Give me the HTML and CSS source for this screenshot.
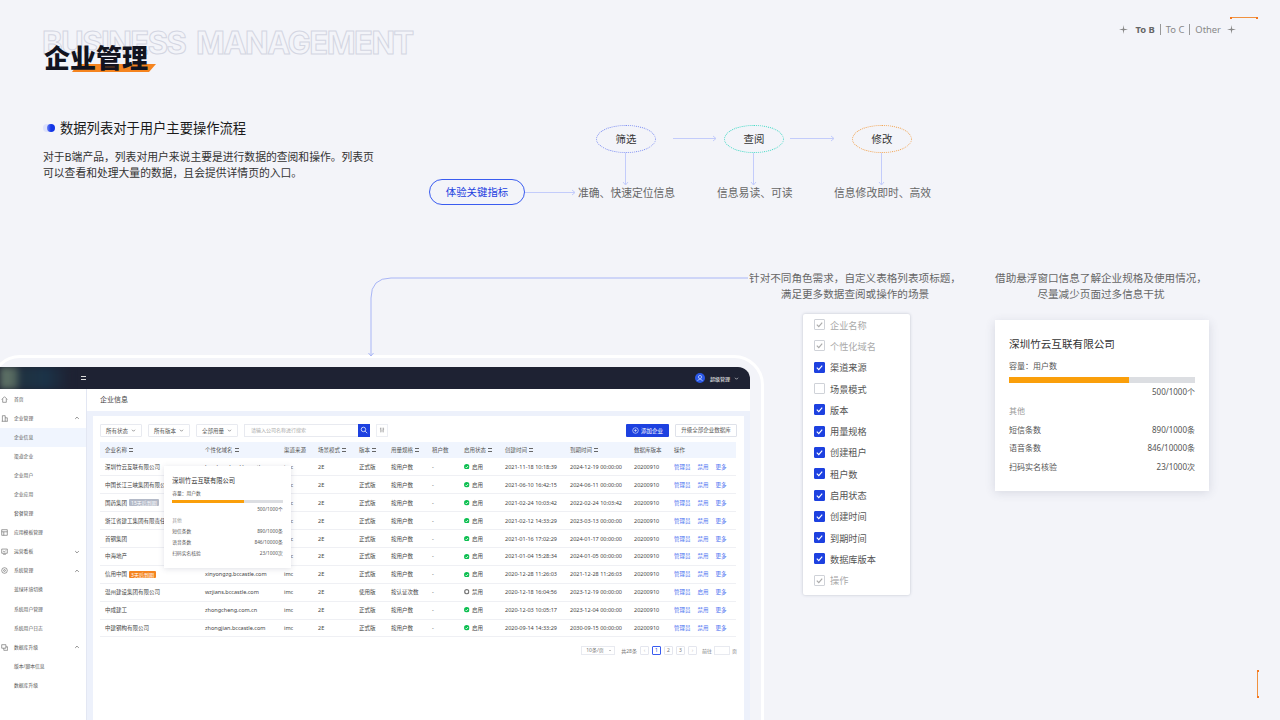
FILE: index.html
```html
<!DOCTYPE html>
<html>
  <head>
    <meta charset="utf-8">
    <title>企业管理</title>
    <link rel="stylesheet" href="styles.css">
  </head>

  <body>
    <svg class="sprite" width="0" height="0">
      <symbol id="spark" viewBox="0 0 10 10"><path d="M5 0 L5.7 4.3 L10 5 L5.7 5.7 L5 10 L4.3 5.7 L0 5 L4.3 4.3 Z" fill="currentColor"/></symbol>
      <symbol id="ok" viewBox="0 0 10 10"><circle cx="5" cy="5" r="5" fill="#0cbf50"/><path d="M2.6 5.2 L4.4 7 L7.4 3.6" fill="none" stroke="#fff" stroke-width="1.5"/></symbol>
      <symbol id="off" viewBox="0 0 10 10"><circle cx="5" cy="5" r="3.7" fill="none" stroke="#777" stroke-width="2.2"/></symbol>
      <symbol id="tick" viewBox="0 0 10 10"><path d="M2 5.2 L4.2 7.4 L8 3" fill="none" stroke="currentColor" stroke-width="1.3"/></symbol>
      <symbol id="down" viewBox="0 0 10 10"><path d="M2 3.5 L5 6.5 L8 3.5" fill="none" stroke="currentColor" stroke-width="1.2"/></symbol>
      <symbol id="up" viewBox="0 0 10 10"><path d="M2 6.5 L5 3.5 L8 6.5" fill="none" stroke="currentColor" stroke-width="1.2"/></symbol>
    </svg>

    <div class="slide">
      <div class="header">
        <div class="brand">
          <div class="brand-en">BUSINESS MANAGEMENT</div>
          <div class="brand-bar"></div>
          <h1 class="brand-cn">企业管理</h1>
        </div>
        <div class="nav">
          <div class="nav-line"></div>
          <svg class="nav-spark"><use href="#spark"/></svg>
          <span class="nav-on">To B</span>
          <i class="nav-sep"></i>
          <span>To C</span>
          <i class="nav-sep"></i>
          <span>Other</span>
          <svg class="nav-spark nav-spark-end"><use href="#spark"/></svg>
        </div>
      </div>

      <div class="top">
        <div class="intro">
          <div class="intro-title"><i class="intro-dot"></i>数据列表对于用户主要操作流程</div>
          <p class="intro-text">对于B端产品，列表对用户来说主要是进行数据的查阅和操作。列表页可以查看和处理大量的数据，且会提供详情页的入口。</p>
        </div>

        <div class="flow">
          <svg class="flow-lines" width="520" height="100">
            <g fill="none" stroke="#c3ccfb" stroke-width="1">
              <path d="M96 82.5 H146 M143 80 L146 82.5 L143 85"/>
              <path d="M244 28.5 H287 M284 26 L287 28.5 L284 31"/>
              <path d="M361 28.5 H405 M402 26 L405 28.5 L402 31"/>
              <path d="M196.5 43 V75 M194 72 L196.5 75 L199 72"/>
              <path d="M324.5 43 V75 M322 72 L324.5 75 L327 72"/>
              <path d="M452.5 43 V75 M450 72 L452.5 75 L455 72"/>
            </g>
          </svg>
          <div class="flow-pill">体验关键指标</div>
          <div class="flow-node node-a">筛选</div>
          <div class="flow-node node-b">查阅</div>
          <div class="flow-node node-c">修改</div>
          <div class="flow-note note-a">准确、快速定位信息</div>
          <div class="flow-note note-b">信息易读、可读</div>
          <div class="flow-note note-c">信息修改即时、高效</div>
        </div>
      </div>

      <div class="lower">
        <div class="device-col">
          <div class="device">
            <div class="app">
              <div class="app-top">
                <div class="app-logo"></div>
                <div class="app-menu"></div>
                <div class="app-user">
                  <svg class="app-avatar" viewBox="0 0 10 10"><circle cx="5" cy="5" r="5" fill="#2b58e6"/><circle cx="5" cy="4" r="1.6" fill="none" stroke="#cfdcff" stroke-width=".7"/><path d="M2.6 8 C3 5.8 7 5.8 7.4 8" fill="none" stroke="#cfdcff" stroke-width=".7"/></svg>
                  <span>超级管理</span>
                  <svg class="app-caret"><use href="#down"/></svg>
                </div>
              </div>

              <div class="app-body">
                <div class="side">
                  <div class="side-item"><svg class="side-icon" viewBox="0 0 10 10"><path d="M1 5 L5 1 L9 5 M2.4 4 V9 H7.6 V4"/></svg>首页</div>
                  <div class="side-item"><svg class="side-icon" viewBox="0 0 10 10"><path d="M2 9 V1 H6 V9 M6 4 H9 V9 M1 9 H9.5"/></svg>企业管理<svg class="side-arrow"><use href="#up"/></svg></div>
                  <div class="side-item side-active">企业信息</div>
                  <div class="side-item">渠道企业</div>
                  <div class="side-item">企业用户</div>
                  <div class="side-item">企业应用</div>
                  <div class="side-item">套餐管理</div>
                  <div class="side-item"><svg class="side-icon" viewBox="0 0 10 10"><path d="M1 1 H9 V9 H1 Z M1 4 H9 M4 4 V9"/></svg>应用模板管理</div>
                  <div class="side-item"><svg class="side-icon" viewBox="0 0 10 10"><path d="M1 1.5 H9 V7.5 H1 Z M3 9 H7 M3 4.5 L5 5.5 L7 3.5"/></svg>运营看板<svg class="side-arrow"><use href="#down"/></svg></div>
                  <div class="side-item"><svg class="side-icon" viewBox="0 0 10 10"><circle cx="5" cy="5" r="4"/><circle cx="5" cy="5" r="1.3"/></svg>系统管理<svg class="side-arrow"><use href="#up"/></svg></div>
                  <div class="side-item">蓝绿环境切换</div>
                  <div class="side-item">系统用户管理</div>
                  <div class="side-item">系统用户日志</div>
                  <div class="side-item"><svg class="side-icon" viewBox="0 0 10 10"><path d="M1 1 H7 V6 H1 Z M4 6 V9 H9.5 V4 H7"/></svg>数据库升级<svg class="side-arrow"><use href="#up"/></svg></div>
                  <div class="side-item">版本/脚本信息</div>
                  <div class="side-item">数据库升级</div>
                </div>

                <div class="main">
                  <div class="main-title">企业信息</div>
                  <div class="panel">
                    <div class="tools">
                      <div class="select">所有状态<svg><use href="#down"/></svg></div>
                      <div class="select">所有版本<svg><use href="#down"/></svg></div>
                      <div class="select">全部用量<svg><use href="#down"/></svg></div>
                      <div class="search">
                        <div class="search-input">请输入公司名称进行搜索</div>
                        <div class="search-btn"><svg viewBox="0 0 10 10"><circle cx="4.3" cy="4.3" r="2.8" fill="none" stroke="#fff" stroke-width=".9"/><path d="M6.4 6.4 L9 9" stroke="#fff" stroke-width=".9"/></svg></div>
                      </div>
                      <div class="gear"><svg viewBox="0 0 10 10"><path d="M2.5 1 V9 M5 1 V9 M7.5 1 V9 M1.5 3 H3.5 M4 6.5 H6 M6.5 3.5 H8.5" fill="none" stroke="#777" stroke-width=".7"/></svg></div>
                      <div class="btn-add"><svg viewBox="0 0 10 10"><circle cx="5" cy="5" r="4" fill="none" stroke="#fff" stroke-width=".8"/><path d="M3 5 H7 M5 3 V7" stroke="#fff" stroke-width=".8"/></svg>添加企业</div>
                      <div class="btn-up">升级全部企业数据库</div>
                    </div>

                    <table class="grid">
                      <thead>
                        <tr>
                          <th class="c-name"><span class="sort">企业名称</span></th>
                          <th class="c-domain"><span class="sort">个性化域名</span></th>
                          <th class="c-chan">渠道来源</th>
                          <th class="c-mode"><span class="sort">场景模式</span></th>
                          <th class="c-ver"><span class="sort">版本</span></th>
                          <th class="c-use"><span class="sort">用量规格</span></th>
                          <th class="c-ten">租户数</th>
                          <th class="c-stat"><span class="sort">启用状态</span></th>
                          <th class="c-time"><span class="sort">创建时间</span></th>
                          <th class="c-end"><span class="sort">到期时间</span></th>
                          <th class="c-db">数据库版本</th>
                          <th class="c-act">操作</th>
                        </tr>
                      </thead>
                      <tbody>
                        <tr><td>深圳竹云互联有限公司</td><td>bamboocloud.bccastle.com</td><td>imc</td><td>2E</td><td>正式版</td><td>按用户数</td><td>-</td><td><svg class="stat"><use href="#ok"/></svg>启用</td><td>2021-11-18 10:18:39</td><td>2024-12-19 00:00:00</td><td>20200910</td><td class="acts"><a>管理员</a><a>禁用</a><a>更多</a></td></tr>
                        <tr><td>中国长江三峡集团有限公司</td><td>ctg.bccastle.com</td><td>imc</td><td>2E</td><td>正式版</td><td>按用户数</td><td>-</td><td><svg class="stat"><use href="#ok"/></svg>启用</td><td>2021-06-10 16:42:15</td><td>2024-06-11 00:00:00</td><td>20200910</td><td class="acts"><a>管理员</a><a>禁用</a><a>更多</a></td></tr>
                        <tr><td>国药集团<span class="tag tag-gray">15天后到期</span></td><td>sinopharm.bccastle.com</td><td>imc</td><td>2E</td><td>正式版</td><td>按用户数</td><td>-</td><td><svg class="stat"><use href="#ok"/></svg>启用</td><td>2021-02-24 10:03:42</td><td>2022-02-24 10:03:42</td><td>20200910</td><td class="acts"><a>管理员</a><a>禁用</a><a>更多</a></td></tr>
                        <tr><td>浙江省建工集团有限责任公司</td><td>zjjg.bccastle.com</td><td>imc</td><td>2E</td><td>正式版</td><td>按用户数</td><td>-</td><td><svg class="stat"><use href="#ok"/></svg>启用</td><td>2021-02-12 14:33:29</td><td>2023-03-13 00:00:00</td><td>20200910</td><td class="acts"><a>管理员</a><a>禁用</a><a>更多</a></td></tr>
                        <tr><td>首钢集团</td><td>shougang.bccastle.com</td><td>imc</td><td>2E</td><td>正式版</td><td>按用户数</td><td>-</td><td><svg class="stat"><use href="#ok"/></svg>启用</td><td>2021-01-16 17:02:29</td><td>2024-01-17 00:00:00</td><td>20200910</td><td class="acts"><a>管理员</a><a>禁用</a><a>更多</a></td></tr>
                        <tr><td>中海地产</td><td>coli.bccastle.com</td><td>imc</td><td>2E</td><td>正式版</td><td>按用户数</td><td>-</td><td><svg class="stat"><use href="#ok"/></svg>启用</td><td>2021-01-04 15:28:34</td><td>2024-01-05 00:00:00</td><td>20200910</td><td class="acts"><a>管理员</a><a>禁用</a><a>更多</a></td></tr>
                        <tr><td>信用中国<span class="tag tag-orange">3天后到期</span></td><td>xinyongzg.bccastle.com</td><td>imc</td><td>2E</td><td>正式版</td><td>按用户数</td><td>-</td><td><svg class="stat"><use href="#ok"/></svg>启用</td><td>2020-12-28 11:26:03</td><td>2021-12-28 11:26:03</td><td>20200910</td><td class="acts"><a>管理员</a><a>禁用</a><a>更多</a></td></tr>
                        <tr><td>温州建设集团有限公司</td><td>wzjians.bccastle.com</td><td>imc</td><td>2E</td><td>使用版</td><td>按认证次数</td><td>-</td><td><svg class="stat"><use href="#off"/></svg>禁用</td><td>2020-12-18 16:04:56</td><td>2023-12-19 00:00:00</td><td>20200910</td><td class="acts"><a>管理员</a><a>启用</a><a>更多</a></td></tr>
                        <tr><td>中成建工</td><td>zhongcheng.com.cn</td><td>imc</td><td>2E</td><td>正式版</td><td>按用户数</td><td>-</td><td><svg class="stat"><use href="#ok"/></svg>启用</td><td>2020-12-03 10:05:17</td><td>2023-12-04 00:00:00</td><td>20200910</td><td class="acts"><a>管理员</a><a>禁用</a><a>更多</a></td></tr>
                        <tr><td>中建钢构有限公司</td><td>zhongjian.bccastle.com</td><td>imc</td><td>2E</td><td>正式版</td><td>按用户数</td><td>-</td><td><svg class="stat"><use href="#ok"/></svg>启用</td><td>2020-09-14 14:33:29</td><td>2030-09-15 00:00:00</td><td>20200910</td><td class="acts"><a>管理员</a><a>禁用</a><a>更多</a></td></tr>
                      </tbody>
                    </table>

                    <div class="pager">
                      <div class="pager-size">10条/页<i></i></div>
                      <span class="pager-total">共28条</span>
                      <div class="pager-btn pager-dim">‹</div>
                      <div class="pager-btn pager-on">1</div>
                      <div class="pager-btn">2</div>
                      <div class="pager-btn">3</div>
                      <div class="pager-btn pager-dim">›</div>
                      <span class="pager-go">前往</span>
                      <div class="pager-input"></div>
                      <span>页</span>
                    </div>

                    <div class="usage usage-float">
                      <div class="usage-title">深圳竹云互联有限公司</div>
                      <div class="usage-cap">容量：用户数</div>
                      <div class="usage-bar"><div class="usage-fill"></div></div>
                      <div class="usage-num">500/1000个</div>
                      <div class="usage-other">其他</div>
                      <div class="usage-row"><span>短信条数</span><span>890/1000条</span></div>
                      <div class="usage-row"><span>语音条数</span><span>846/10000条</span></div>
                      <div class="usage-row"><span>扫码实名核验</span><span>23/1000次</span></div>
                    </div>
                  </div>
                </div>
              </div>
            </div>
          </div>
        </div>

        <div class="note-col note-col-a">
          <p class="note-text">针对不同角色需求，自定义表格列表项标题，<br>满足更多数据查阅或操作的场景</p>
          <div class="columns">
            <div class="col-item col-locked"><i class="box"><svg><use href="#tick"/></svg></i>企业名称</div>
            <div class="col-item col-locked"><i class="box"><svg><use href="#tick"/></svg></i>个性化域名</div>
            <div class="col-item"><i class="box box-on"><svg><use href="#tick"/></svg></i>渠道来源</div>
            <div class="col-item"><i class="box"></i>场景模式</div>
            <div class="col-item"><i class="box box-on"><svg><use href="#tick"/></svg></i>版本</div>
            <div class="col-item"><i class="box box-on"><svg><use href="#tick"/></svg></i>用量规格</div>
            <div class="col-item"><i class="box box-on"><svg><use href="#tick"/></svg></i>创建租户</div>
            <div class="col-item"><i class="box box-on"><svg><use href="#tick"/></svg></i>租户数</div>
            <div class="col-item"><i class="box box-on"><svg><use href="#tick"/></svg></i>启用状态</div>
            <div class="col-item"><i class="box box-on"><svg><use href="#tick"/></svg></i>创建时间</div>
            <div class="col-item"><i class="box box-on"><svg><use href="#tick"/></svg></i>到期时间</div>
            <div class="col-item"><i class="box box-on"><svg><use href="#tick"/></svg></i>数据库版本</div>
            <div class="col-item col-locked"><i class="box"><svg><use href="#tick"/></svg></i>操作</div>
          </div>
        </div>

        <div class="note-col note-col-b">
          <p class="note-text">借助悬浮窗口信息了解企业规格及使用情况，<br>尽量减少页面过多信息干扰</p>
          <div class="usage usage-big">
            <div class="usage-title">深圳竹云互联有限公司</div>
            <div class="usage-cap">容量：用户数</div>
            <div class="usage-bar"><div class="usage-fill"></div></div>
            <div class="usage-num">500/1000个</div>
            <div class="usage-other">其他</div>
            <div class="usage-row"><span>短信条数</span><span>890/1000条</span></div>
            <div class="usage-row"><span>语音条数</span><span>846/10000条</span></div>
            <div class="usage-row"><span>扫码实名核验</span><span>23/1000次</span></div>
          </div>
        </div>
      </div>

      <!-- line from the note down to the table -->
      <svg class="wire" width="800" height="370">
        <path d="M748 278 H391 Q371 278 371 298 V356 M368.5 353 L371 356 L373.5 353" fill="none" stroke="#a9b6f6" stroke-width="1"/>
      </svg>
      <div class="mark-end"></div>
    </div>
  </body>
</html>
```

FILE: styles.css
```css
* {
  box-sizing: border-box;
}

body {
  margin: 0;
  background-color: #f3f4f9;
  font-family: "Noto Sans", "Noto Sans CJK SC", sans-serif;
  color: #333;
}

.sprite {
  position: absolute;
}

.slide {
  position: relative;
  width: 1280px;
  height: 720px;
  overflow: hidden;
}

/* header */
.header {
  display: flex;
  justify-content: space-between;
  height: 110px;
}

.brand {
  position: relative;
  width: 400px;
  margin-left: 44px;
}

.brand-en {
  position: absolute;
  left: -2px;
  top: 24px;
  font-family: Inter, sans-serif;
  font-size: 31px;
  font-weight: 700;
  letter-spacing: -1.5px;
  word-spacing: 5px;
  white-space: nowrap;
  color: transparent;
  -webkit-text-stroke: 1px #d3d6e2;
}

.brand-bar {
  position: absolute;
  left: 28px;
  top: 64px;
  width: 84px;
  height: 8px;
  background-color: #f5841f;
  clip-path: polygon(6px 0, 100% 0, calc(100% - 7px) 100%, 0 100%);
}

.brand-cn {
  position: absolute;
  left: 0;
  top: 39px;
  margin: 0;
  font-family: "Noto Sans CJK SC", sans-serif;
  font-size: 26px;
  font-weight: 900;
  line-height: 36px;
  color: #12141f;
}

.nav {
  position: relative;
  display: flex;
  align-items: center;
  align-self: flex-start;
  margin-top: 21px;
  margin-right: 44px;
  height: 16px;
  font-size: 9.4px;
  color: #888;
}

.nav-line {
  position: absolute;
  right: -22px;
  top: -4px;
  width: 28px;
  height: 1px;
  background-color: #f0913f;
}

.nav-line::before,
.nav-line::after {
  content: "";
  position: absolute;
  top: -0.5px;
  width: 2px;
  height: 2px;
  background-color: #f5781f;
}

.nav-line::before {
  left: 0;
}

.nav-line::after {
  right: 0;
}

.nav-spark {
  width: 9px;
  height: 9px;
  margin-right: 7px;
  color: #888;
}

.nav-spark-end {
  margin-right: 0;
  margin-left: 6px;
}

.nav-on {
  font-weight: 700;
  color: #666;
}

.nav-sep {
  width: 1px;
  height: 11px;
  margin: 0 5px;
  background-color: #999;
}

/* intro + flow */
.top {
  display: flex;
  height: 160px;
}

.intro {
  width: 340px;
  margin-left: 43px;
  padding-top: 8px;
}

.intro-title {
  display: flex;
  align-items: center;
  font-size: 13.3px;
  line-height: 20px;
  color: #1a1a1a;
}

.intro-dot {
  position: relative;
  width: 12px;
  height: 8px;
  margin-right: 5px;
  border-radius: 4px;
  background-color: #dde2fb;
}

.intro-dot::after {
  content: "";
  position: absolute;
  right: 0;
  top: 0;
  width: 8px;
  height: 8px;
  border-radius: 50%;
  background: linear-gradient(90deg, #6c82f5, #1235e6 50%);
}

.intro-text {
  width: 335px;
  margin: 11px 0 0;
  font-size: 10.8px;
  line-height: 16px;
  color: #333;
}

.flow {
  position: relative;
  flex: 1;
  margin-left: 46px;
}

.flow-lines {
  position: absolute;
  left: 0;
  top: 0;
}

.flow-pill {
  position: absolute;
  left: 0;
  top: 69px;
  width: 96px;
  height: 26px;
  border: 1.2px solid #3a5cf0;
  border-radius: 13px;
  font-size: 10.4px;
  line-height: 24px;
  text-align: center;
  color: #1d41e0;
}

.flow-node {
  position: absolute;
  top: 15px;
  width: 60px;
  height: 28px;
  border-radius: 50%;
  font-size: 10.4px;
  line-height: 26px;
  text-align: center;
  color: #333;
}

.node-a {
  left: 167px;
  border: 1px dotted #7c8df2;
}

.node-b {
  left: 295px;
  border: 1px dotted #3fd8c4;
}

.node-c {
  left: 423px;
  border: 1px dotted #f2a24e;
}

.flow-note {
  position: absolute;
  top: 75px;
  font-size: 10.8px;
  line-height: 16px;
  white-space: nowrap;
  color: #666;
}

.note-a {
  left: 149px;
}

.note-b {
  left: 288px;
}

.note-c {
  left: 405px;
}

/* lower part */
.lower {
  display: flex;
  height: 450px;
}

.device-col {
  width: 744px;
  padding-top: 85px;
}

.device {
  width: 774px;
  height: 400px;
  margin-left: -10px;
  padding: 9px 11px 0 7px;
  border: 3px solid #fff;
  border-radius: 30px;
  background-color: #f3f4f9;
}

.app {
  width: 750px;
  overflow: hidden;
  border-top-right-radius: 12px;
}

.app-top {
  display: flex;
  align-items: center;
  height: 22px;
  background-color: #1e2233;
  color: #fff;
  overflow: hidden;
}

.app-logo {
  width: 70px;
  height: 22px;
  filter: blur(3px);
  background: linear-gradient(90deg, #5f7268 0, #55685f 20%, #1f3140 30%, #1b3348 65%, #1e2233 100%);
}

.app-menu {
  width: 5px;
  height: 4px;
  margin-left: 11px;
  border-top: 1px solid #ddd;
  border-bottom: 1px solid #ddd;
}

.app-user {
  display: flex;
  align-items: center;
  margin-left: auto;
  margin-right: 11px;
  font-size: 5px;
}

.app-avatar {
  width: 10px;
  height: 10px;
  margin-right: 5px;
}

.app-caret {
  width: 5px;
  height: 5px;
  margin-left: 4px;
  color: #fff;
}

.app-body {
  display: flex;
  height: 331px;
}

.side {
  width: 87px;
  flex-shrink: 0;
  padding-top: 0.5px;
  background-color: #fff;
  border-right: 1px solid #e3e7f3;
}

.side-item {
  position: relative;
  height: 19.1px;
  padding-left: 14px;
  font-size: 4.8px;
  line-height: 19.1px;
  white-space: nowrap;
  color: #555;
}

.side-active {
  background-color: #f0f5fe;
}

.side-icon {
  position: absolute;
  left: 1px;
  top: 6px;
  width: 7px;
  height: 7px;
  fill: none;
  stroke: #555;
  stroke-width: 0.8;
}

.side-arrow {
  position: absolute;
  left: 74px;
  top: 6.5px;
  width: 6px;
  height: 6px;
  color: #666;
}

.main {
  flex: 1;
  background-color: #edf1fb;
}

.main-title {
  height: 22px;
  padding-left: 13px;
  background-color: #fff;
  font-size: 7px;
  line-height: 22px;
  color: #444;
}

.panel {
  position: relative;
  height: 310px;
  margin: 5px 6px 0;
  padding: 8px 7px 0;
  background-color: #fff;
  font-size: 5.5px;
}

.tools {
  display: flex;
  align-items: center;
  height: 13px;
}

.select {
  display: flex;
  align-items: center;
  justify-content: center;
  width: 42px;
  height: 13px;
  margin-right: 6px;
  border: 1px solid #e8eaf0;
  border-radius: 1px;
  color: #555;
}

.select svg {
  width: 5px;
  height: 5px;
  margin-left: 3px;
  color: #555;
}

.search {
  display: flex;
  width: 126px;
}

.search-input {
  flex: 1;
  height: 13px;
  padding-left: 6px;
  border: 1px solid #e8eaf0;
  border-right: 0;
  font-size: 5px;
  line-height: 11px;
  color: #aaa;
}

.search-btn {
  width: 12px;
  height: 13px;
  padding: 2px;
  background-color: #1d41e0;
}

.search-btn svg {
  display: block;
  width: 8px;
  height: 8px;
}

.gear {
  width: 12px;
  height: 13px;
  margin-left: 6px;
  padding: 2px;
  border: 1px solid #eceef3;
}

.gear svg {
  display: block;
}

.btn-add {
  display: flex;
  align-items: center;
  justify-content: center;
  width: 43px;
  height: 13px;
  margin-left: auto;
  border-radius: 1px;
  background-color: #1d41e0;
  color: #fff;
}

.btn-add svg {
  width: 7px;
  height: 7px;
  margin-right: 2px;
}

.btn-up {
  width: 62px;
  height: 13px;
  margin-left: 6px;
  border: 1px solid #dfe2ea;
  border-radius: 1px;
  line-height: 11px;
  text-align: center;
  color: #555;
}

.grid {
  width: 636px;
  margin-top: 5px;
  border-collapse: collapse;
  table-layout: fixed;
}

.grid th {
  height: 16px;
  padding: 0 0 0 5px;
  background-color: #f0f5fe;
  font-weight: 400;
  text-align: left;
  color: #555;
}

.grid td {
  height: 17.9px;
  padding: 0 0 0 5px;
  border-bottom: 1px solid #eff0f4;
  white-space: nowrap;
  overflow: hidden;
  color: #444;
}

.c-name { width: 100px; }
.c-domain { width: 79px; }
.c-chan { width: 34px; }
.c-mode { width: 41px; }
.c-ver { width: 32px; }
.c-use { width: 41px; }
.c-ten { width: 32px; }
.c-stat { width: 41px; }
.c-time { width: 65px; }
.c-end { width: 64px; }
.c-db { width: 40px; }
.c-act { width: 67px; }

.sort::after {
  content: "";
  display: inline-block;
  width: 4px;
  height: 4px;
  margin-left: 2px;
  background: repeating-linear-gradient(180deg, #666 0, #666 0.6px, transparent 0.6px, transparent 1.6px);
}

.tag {
  margin-left: 2px;
  padding: 0.5px 2px;
  border-radius: 1px;
  font-size: 5px;
  color: #fff;
}

.tag-gray {
  background-color: #b4bac8;
}

.tag-orange {
  background-color: #f5841f;
}

.stat {
  width: 5.5px;
  height: 5.5px;
  margin-right: 2.5px;
  vertical-align: -0.8px;
}

.acts a {
  margin-right: 7px;
  color: #4a6ff0;
}

.pager {
  display: flex;
  align-items: center;
  justify-content: flex-end;
  margin-top: 9px;
  height: 9px;
  font-size: 5px;
  color: #777;
}

.pager-size {
  position: relative;
  width: 34px;
  height: 9px;
  padding-left: 4px;
  border: 1px solid #e8eaf0;
  line-height: 7px;
}

.pager-size i {
  position: absolute;
  right: 3px;
  top: 3px;
  border: 1.5px solid transparent;
  border-top-color: #888;
}

.pager-total {
  margin: 0 3px 0 6px;
}

.pager-btn {
  width: 9px;
  height: 9px;
  margin-right: 3px;
  border: 1px solid #e4e6ee;
  border-radius: 1px;
  line-height: 7px;
  text-align: center;
}

.pager-dim {
  color: #bbb;
}

.pager-on {
  border-color: #3a5cf0;
  color: #1d41e0;
}

.pager-go {
  margin-left: 2px;
}

.pager-input {
  width: 16px;
  height: 9px;
  margin: 0 2px;
  border: 1px solid #e8eaf0;
}

/* usage card, sized in em so the floating one is the same card scaled down */
.usage {
  padding: 2em 1.75em 1.875em;
  background-color: #fff;
  box-shadow: 0 0.2em 1.2em rgba(60, 70, 100, 0.16);
  color: #555;
}

.usage-big {
  width: 214px;
  margin: 18px 0 0 5px;
  font-size: 8px;
}

.usage-float {
  position: absolute;
  left: 71px;
  top: 50px;
  width: 127px;
  font-size: 4.75px;
}

.usage-title {
  font-size: 1.325em;
  line-height: 1.51em;
  white-space: nowrap;
  color: #333;
}

.usage-cap {
  margin-top: 0.875em;
  line-height: 1.75em;
}

.usage-bar {
  height: 0.75em;
  margin-top: 0.5em;
  background-color: #dcdee2;
}

.usage-fill {
  width: 64.5%;
  height: 100%;
  background-color: #fa9f0a;
}

.usage-num {
  margin-top: 0.25em;
  line-height: 1.75em;
  text-align: right;
}

.usage-other {
  margin-top: 0.625em;
  margin-bottom: 0.375em;
  line-height: 1.75em;
  color: #999;
}

.usage-row {
  display: flex;
  justify-content: space-between;
  line-height: 2.31em;
  white-space: nowrap;
}

/* notes on the right */
.note-col {
  width: 220px;
  flex-shrink: 0;
}

.note-col-b {
  margin-left: 26px;
}

.note-text {
  margin: 0;
  padding-left: 2px;
  font-size: 10.6px;
  line-height: 16px;
  text-align: center;
  white-space: nowrap;
  color: #666;
}

.columns {
  width: 107px;
  height: 281px;
  margin: 12px 0 0 59px;
  background-color: #fff;
  border-radius: 2px;
  box-shadow: 0 0 3px rgba(70, 80, 110, 0.3);
}

.col-item {
  display: flex;
  align-items: center;
  height: 21.3px;
  padding-left: 11px;
  font-size: 9.2px;
  color: #555;
}

.col-locked {
  color: #aaa;
}

.box {
  display: block;
  width: 11px;
  height: 11px;
  margin-right: 5px;
  border: 1px solid #cfd2d8;
  border-radius: 1px;
  background-color: #fff;
  color: #aaa;
}

.box svg {
  display: block;
  width: 9px;
  height: 9px;
}

.box-on {
  border-color: #1d41e0;
  background-color: #1d41e0;
  color: #fff;
}

/* loose lines on the canvas */
.wire {
  position: absolute;
  left: 0;
  top: 0;
  pointer-events: none;
}

.mark-end {
  position: absolute;
  left: 1257px;
  top: 670px;
  width: 1px;
  height: 28px;
  background-color: #f0913f;
}

.mark-end::before,
.mark-end::after {
  content: "";
  position: absolute;
  left: -0.5px;
  width: 2px;
  height: 2px;
  background-color: #f5781f;
}

.mark-end::before {
  top: 0;
}

.mark-end::after {
  bottom: 0;
}
```
